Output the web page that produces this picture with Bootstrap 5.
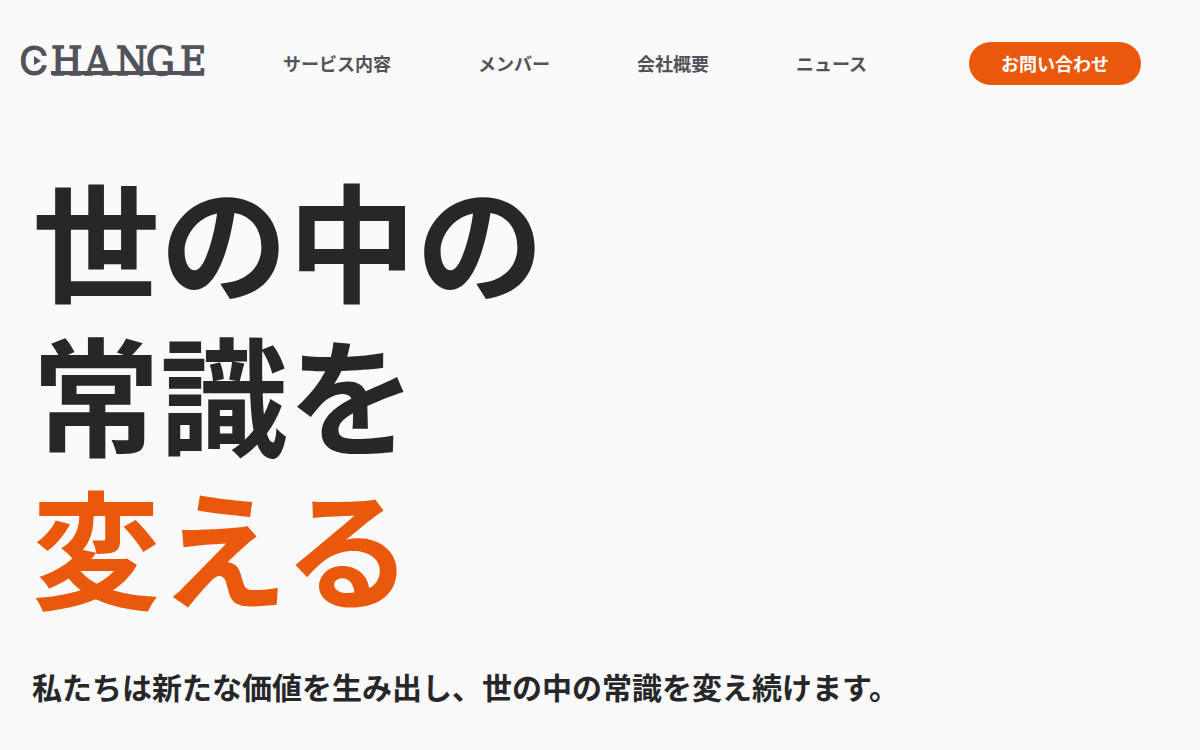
<!DOCTYPE html>
<html lang="ja">
<head>
<meta charset="utf-8">
<meta name="viewport" content="width=device-width, initial-scale=1">
<title>CHANGE</title>
<link href="https://cdn.jsdelivr.net/npm/bootstrap@5.3.0/dist/css/bootstrap.min.css" rel="stylesheet">
<style>
body { background: #fafafa; color: #27272a; font-family: "Noto Sans CJK JP", sans-serif; }
.site-header { padding: 42px 59px 0 20px; }
.brand-logo { display: block; color: #52525b; }
.site-links { gap: 87px; margin-left: 79px; }
.site-links .nav-link { color: #52525b; font-size: 18px; font-weight: 700; line-height: 27px; padding: 0; }
.btn-contact { --bs-btn-bg: #ea580c; --bs-btn-color: #fff; --bs-btn-hover-bg: #c2410c; --bs-btn-hover-color: #fff; --bs-btn-border-width: 0; font-size: 18px; font-weight: 700; line-height: 27px; padding: 8px 32px; }
.hero { padding: 76px 32px 32px; }
.hero-title { font-size: 128px; font-weight: 700; line-height: 1.2; }
.hero-title .accent { color: #ea580c; }
.hero-copy { font-size: 30px; font-weight: 700; line-height: 36px; margin-top: 46px; }
</style>
</head>
<body>
<header class="site-header d-flex align-items-center">
  <a href="#" class="brand-logo" aria-label="CHANGE">
    <svg class="d-block overflow-visible" width="184" height="40" viewBox="0 0 184 40" fill="currentColor">
      <text y="31" font-family="DejaVu Serif Condensed, DejaVu Serif" font-stretch="condensed" font-size="40"><tspan x="-1" font-family="Inter" font-size="40" font-weight="400" stroke="currentColor">C</tspan><tspan x="31 65 96 126 160" stroke="currentColor" stroke-width="1.4">HANGE</tspan></text>
      <path d="M14 12v9l7-4z"/>
      <path d="M31 27h153v4H31z"/>
    </svg>
  </a>
  <nav class="site-links nav flex-nowrap text-nowrap">
    <a class="nav-link" href="#">サービス内容</a>
    <a class="nav-link" href="#">メンバー</a>
    <a class="nav-link" href="#">会社概要</a>
    <a class="nav-link" href="#">ニュース</a>
  </nav>
  <button type="button" class="btn btn-contact rounded-pill ms-auto text-nowrap">お問い合わせ</button>
</header>
<main class="hero">
  <h1 class="hero-title m-0">世の中の<br>常識を<br><span class="accent">変える</span></h1>
  <p class="hero-copy mb-0">私たちは新たな価値を生み出し、世の中の常識を変え続けます。</p>
</main>
<script src="https://cdn.jsdelivr.net/npm/bootstrap@5.3.0/dist/js/bootstrap.bundle.min.js"></script>
</body>
</html>
